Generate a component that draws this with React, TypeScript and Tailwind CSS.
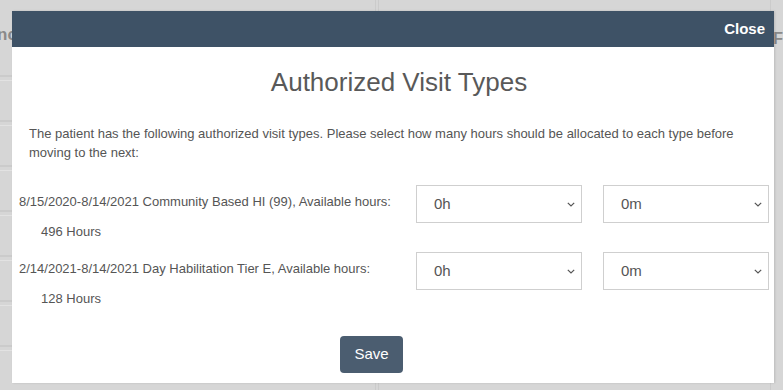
interface VisitType {
  id: number;
  label: string;
  hours: number;
}

const visitTypes: VisitType[] = [
  { id: 1, label: "8/15/2020-8/14/2021 Community Based HI (99), Available hours:", hours: 496 },
  { id: 2, label: "2/14/2021-8/14/2021 Day Habilitation Tier E, Available hours:", hours: 128 },
];

function FakeSelect({ value }: { value: string }) {
  return (
    <div className="flex h-[38px] w-[166px] items-center justify-between border border-[#cfcfcf] bg-white pl-[17px] pr-[6px] text-[15px] text-[#555]">
      <span>{value}</span>
      <svg width="8" height="5" viewBox="0 0 8 5" fill="none" className="mt-[1px]">
        <path d="M0.8 0.8L4 4L7.2 0.8" stroke="#555" strokeWidth="1.2" />
      </svg>
    </div>
  );
}

function BackgroundPage() {
  const leftRows = [0, 1, 2, 3, 4, 5, 6];
  return (
    <div className="flex h-[390px] w-[783px] bg-[#d6d6d6] text-[#8a8a8a]">
      <div className="flex w-[377px] flex-col">
        <div className="h-[75px] pt-[22px] pl-0 text-[17px] font-bold ml-[-3px]">nc</div>
        {leftRows.map((r) => (
          <div key={r} className="h-[45px] border-t-2 border-[#cbcbcb]">
            <div className="mt-[3px] h-px bg-[#e2e2e2]" />
          </div>
        ))}
      </div>
      <div className="w-[4px] border-x border-[#cbcbcb]" />
      <div className="flex w-[394px] flex-col border-r border-[#cbcbcb]">
        <div className="h-[75px]" />
        <div className="h-[43px] border-t-2 border-[#cbcbcb]" />
        <div className="h-[4px] border-y border-[#cbcbcb] bg-[#e2e2e2]" />
      </div>
      <div className="flex-1 pt-[27px] pl-[2px] text-[16px] font-bold">F</div>
    </div>
  );
}

export default function App() {
  return (
    <div className="relative h-[390px] w-[783px] overflow-hidden font-['Liberation_Sans',Arial,sans-serif]">
      <BackgroundPage />

      <div className="absolute left-[12px] top-[11px] flex h-[372px] w-[762px] flex-col bg-white shadow-[1px_0_2px_rgba(0,0,0,0.12)]">
        <div className="flex h-[36px] items-center justify-end bg-[#3e5266] pr-[9px]">
          <span className="text-[15px] font-bold text-white">Close</span>
        </div>

        <h2 className="mt-[20px] text-center text-[26px] leading-[30px] text-[#595959] pl-[12px]">
          Authorized Visit Types
        </h2>

        <p className="mt-[27px] pl-[17px] pr-[20px] text-[13px] leading-[19px] text-[#555]">
          The patient has the following authorized visit types. Please select how many hours should be allocated to each type before moving to the next:
        </p>

        <div className="mt-[23px] flex flex-col gap-[11px] pl-[7px]">
          {visitTypes.map((vt) => (
            <div key={vt.id} className="flex items-start">
              <div className="w-[397px] text-[13px] leading-[19px] text-[#555]">
                <p className="mt-[7px]">{vt.label}</p>
                <p className="mt-[11px] pl-[22px]">{vt.hours} Hours</p>
              </div>
              <div className="flex gap-[21px]">
                <FakeSelect value="0h" />
                <FakeSelect value="0m" />
              </div>
            </div>
          ))}
        </div>

        <div className="mt-[28px] pl-[328px]">
          <button className="h-[37px] w-[63px] rounded-[4px] bg-[#4b5d70] text-[15px] text-white">
            Save
          </button>
        </div>
      </div>
    </div>
  );
}
